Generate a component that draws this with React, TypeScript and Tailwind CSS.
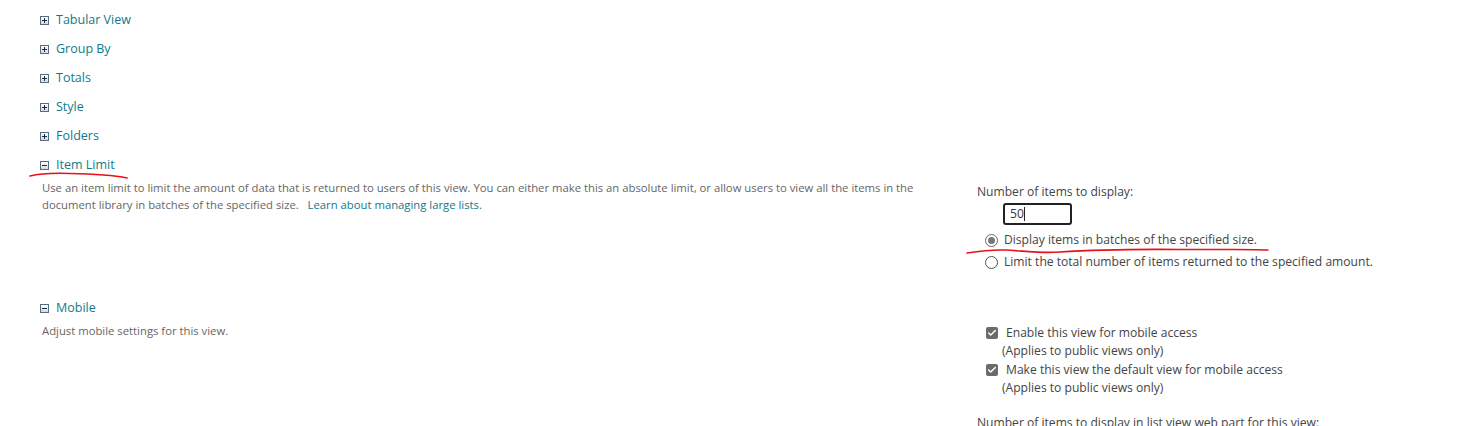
import { Check } from "lucide-react";

const font = "font-['Segoe_UI','Open_Sans',sans-serif]";

const Toggle = ({ open }: { open?: boolean }) => (
    <span className="inline-flex w-[9px] h-[9px] border border-[#5a6b80] bg-gradient-to-b from-white to-[#d5dbe3] items-center justify-center relative">
        <span className="absolute w-[5px] h-[1px] bg-[#1b2a3d]" />
        {!open && <span className="absolute w-[1px] h-[5px] bg-[#1b2a3d]" />}
    </span>
);

const Heading = ({ label, open }: { label: string; open?: boolean }) => (
    <div className="h-[29px] flex items-center gap-[7px] pl-[40px]">
        <Toggle open={open} />
        <span className="text-[12.5px] text-[#0f7a8a]">{label}</span>
    </div>
);

const MobileCheck = ({ label }: { label: string }) => (
    <div className="flex flex-col">
        <div className="flex items-center gap-[8px] pl-[9px]">
            <span className="w-[12px] h-[12px] rounded-[2px] bg-[#6b6b6b] flex items-center justify-center">
                <Check className="w-[10px] h-[10px] text-white" strokeWidth={3.5} />
            </span>
            <span className="text-[12.1px] text-[#444]">{label}</span>
        </div>
        <span className="pl-[25px] text-[12.1px] text-[#444] leading-[18px]">(Applies to public views only)</span>
    </div>
);

export default function App() {
    return (
        <div className={`${font} relative w-[1484px] h-[426px] overflow-hidden bg-white pt-[6px]`}>
            {["Tabular View", "Group By", "Totals", "Style", "Folders"].map((s) => (
                <Heading key={s} label={s} />
            ))}
            <Heading label="Item Limit" open />

            {/* Item Limit body */}
            <div className="grid grid-cols-[977px_1fr] h-[114px]">
                <p className="pl-[42px] pr-[44px] -mt-[1px] text-[11.3px] leading-[17px] text-[#666]">
                    Use an item limit to limit the amount of data that is returned to users of this view. You can either make this an absolute limit, or allow users to view all the items in the document library in batches of the specified size.&nbsp;&nbsp;&nbsp;
                    <span className="text-[#0f7a8a]">Learn about managing large lists.</span>
                </p>
                <div className="pt-[4px] text-[12.1px] text-[#444] flex flex-col">
                    <span className="leading-[16px]">Number of items to display:</span>
                    <div className="pl-[26px] mt-[3px]">
                        <div className="w-[69px] h-[22px] border-2 border-[#222] rounded-[3px] flex items-center px-[5px] text-[#333]">
                            50<span className="w-[1px] h-[14px] bg-[#222]" />
                        </div>
                    </div>
                    <label className="flex items-center gap-[6px] pl-[8px] mt-[5px] h-[20px]">
                        <span className="w-[13px] h-[13px] rounded-full border border-[#666] flex items-center justify-center">
                            <span className="w-[7px] h-[7px] rounded-full bg-[#777]" />
                        </span>
                        Display items in batches of the specified size.
                    </label>
                    <label className="flex items-center gap-[6px] pl-[8px] mt-[2px] h-[20px]">
                        <span className="w-[13px] h-[13px] rounded-full border border-[#555] bg-white" />
                        Limit the total number of items returned to the specified amount.
                    </label>
                </div>
            </div>

            {/* Mobile */}
            <Heading label="Mobile" open />
            <div className="grid grid-cols-[977px_1fr]">
                <p className="pl-[42px] -mt-[1px] text-[11.3px] leading-[17px] text-[#666]">Adjust mobile settings for this view.</p>
                <div className="flex flex-col gap-[1px] pt-[1px]">
                    <MobileCheck label="Enable this view for mobile access" />
                    <MobileCheck label="Make this view the default view for mobile access" />
                    <span className="mt-[16px] text-[12.1px] text-[#444]">Number of items to display in list view web part for this view:</span>
                </div>
            </div>

            {/* red annotations */}
            <svg className="absolute inset-0 pointer-events-none" width="1484" height="426">
                <path d="M30 176 C 42 173, 55 173, 70 173.5 C 95 174, 112 175, 127 178" stroke="#e8101a" strokeWidth="1.6" fill="none" strokeLinecap="round" />
                <path d="M967 253 C 980 251, 990 249.5, 1005 250 C 1025 251, 1040 253.5, 1060 252 C 1090 250, 1120 249, 1180 249.5 C 1220 249.8, 1250 249, 1268 250" stroke="#e8101a" strokeWidth="1.6" fill="none" strokeLinecap="round" />
            </svg>
        </div>
    );
}
